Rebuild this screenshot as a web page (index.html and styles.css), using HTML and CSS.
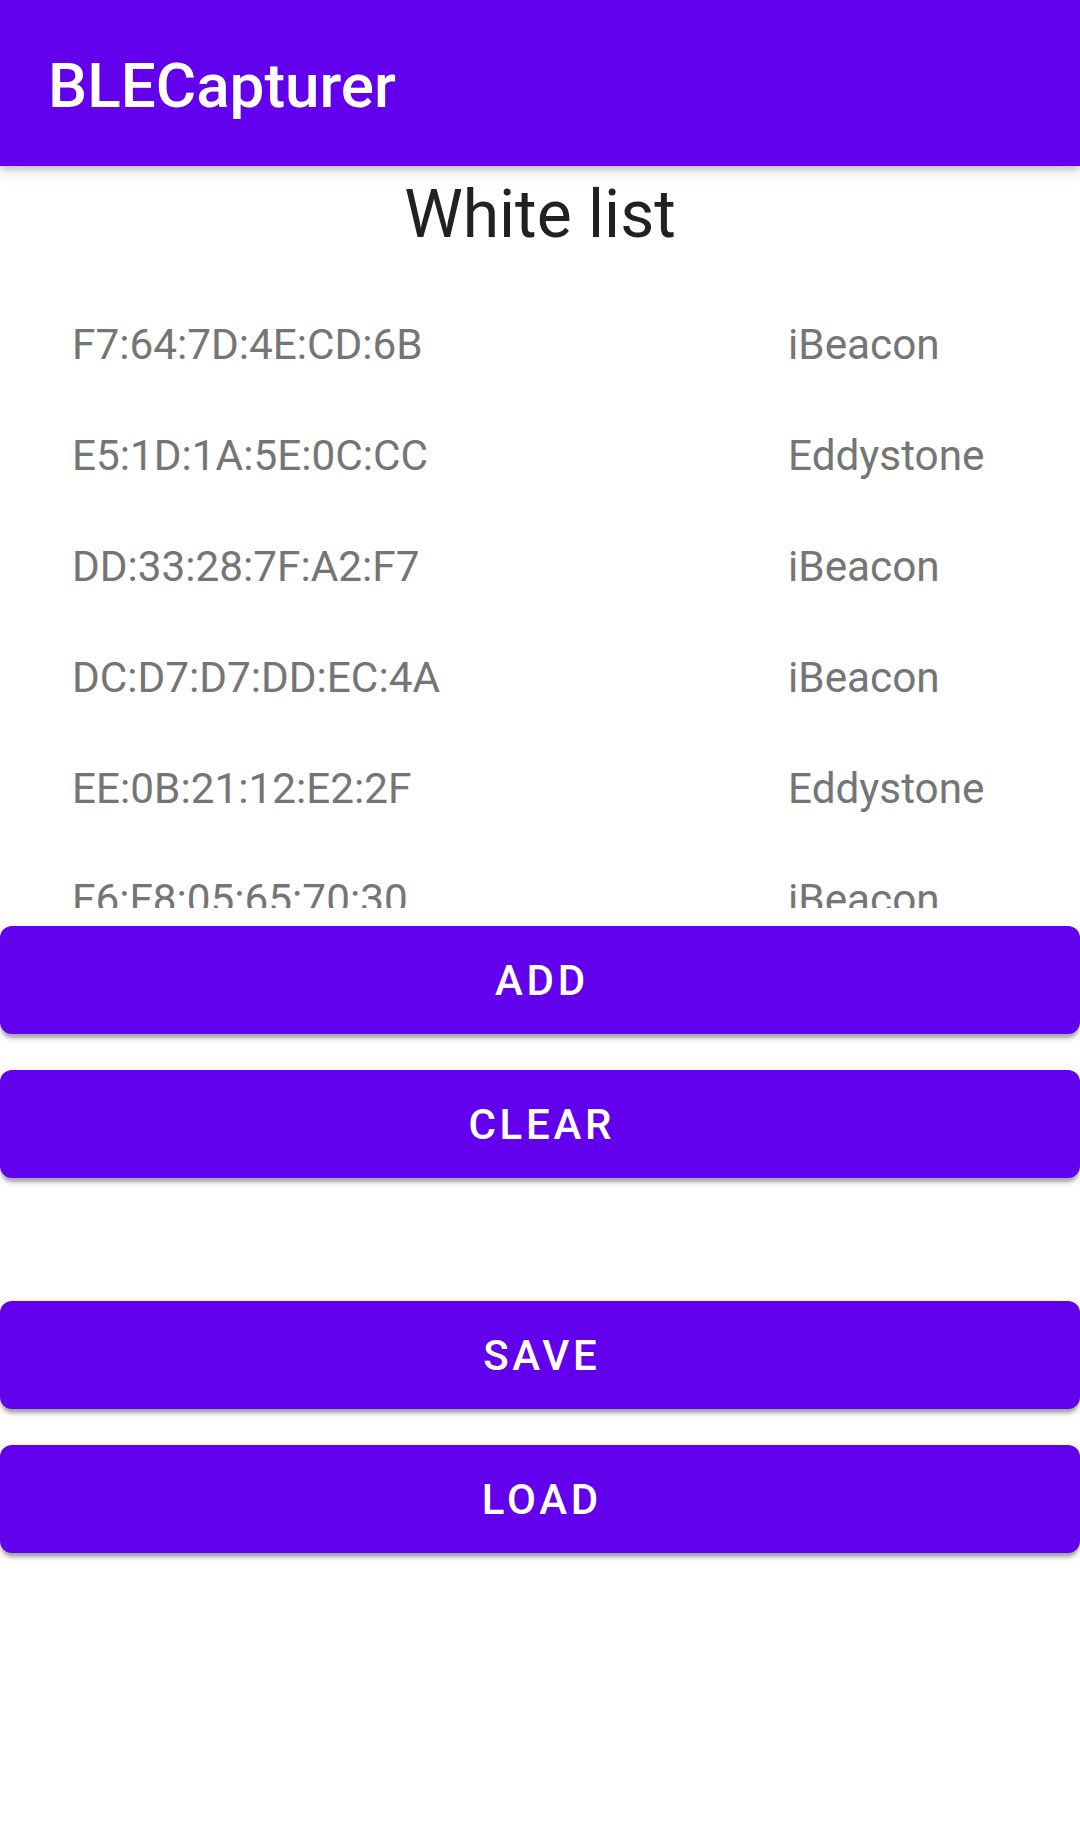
FILE: index.html
```html
<!DOCTYPE html>
<html lang="en">
<head>
<meta charset="utf-8">
<title>BLECapturer</title>
<link rel="stylesheet" href="styles.css">
</head>
<body>
<div class="screen">
  <header class="appbar"><span class="appbar-title">BLECapturer</span></header>
  <h1 class="heading">White list</h1>
  <div class="list">
    <div class="row"><span class="mac">F7:64:7D:4E:CD:6B</span><span class="type">iBeacon</span></div>
    <div class="row"><span class="mac">E5:1D:1A:5E:0C:CC</span><span class="type">Eddystone</span></div>
    <div class="row"><span class="mac">DD:33:28:7F:A2:F7</span><span class="type">iBeacon</span></div>
    <div class="row"><span class="mac">DC:D7:D7:DD:EC:4A</span><span class="type">iBeacon</span></div>
    <div class="row"><span class="mac">EE:0B:21:12:E2:2F</span><span class="type">Eddystone</span></div>
    <div class="row"><span class="mac">F6:F8:05:65:70:30</span><span class="type">iBeacon</span></div>
  </div>
  <div class="actions">
    <div class="group">
      <button class="btn">ADD</button>
      <button class="btn">CLEAR</button>
    </div>
    <div class="group">
      <button class="btn">SAVE</button>
      <button class="btn">LOAD</button>
    </div>
  </div>
</div>
</body>
</html>
```

FILE: styles.css
```css
html, body {
  margin: 0;
  padding: 0;
  background: #ffffff;
}

body {
  font-family: Roboto, "Noto Sans", "Liberation Sans", sans-serif;
}

.screen {
  width: 1080px;
  min-height: 1847px;
  display: flex;
  flex-direction: column;
}

.appbar {
  position: relative;
  z-index: 2;
  height: 166px;
  box-sizing: border-box;
  padding: 6px 0 0 48px;
  background: #6200ee;
  display: flex;
  align-items: center;
  box-shadow: 0 4px 6px rgba(0, 0, 0, 0.16), 0 8px 14px rgba(0, 0, 0, 0.08);
}

.appbar-title {
  color: #ffffff;
  font-size: 62px;
  font-weight: 500;
  line-height: 1;
}

.heading {
  margin: 10px 0 0;
  font-size: 66px;
  font-weight: 400;
  line-height: 77px;
  color: #212121;
  text-align: center;
}

.list {
  margin-top: 36px;
  height: 619px;
  overflow: hidden;
}

.row {
  height: 111px;
  display: grid;
  grid-template-columns: 716px 1fr;
  padding-left: 72px;
  font-size: 42.3px;
  line-height: 111px;
  color: #757575;
}

.actions {
  display: flex;
  flex-direction: column;
  gap: 123px;
  padding-top: 18px;
}

.group {
  display: flex;
  flex-direction: column;
  gap: 36px;
}

.btn {
  height: 108px;
  width: 1080px;
  margin: 0;
  border: none;
  border-radius: 12px;
  background: #6200ee;
  color: #ffffff;
  font-family: Roboto, "Noto Sans", "Liberation Sans", sans-serif;
  font-size: 42px;
  font-weight: 500;
  letter-spacing: 3.75px;
  padding: 0 0 0 3.75px;
  display: flex;
  align-items: center;
  justify-content: center;
  box-shadow: 0 6px 3px -2px rgba(0, 0, 0, 0.2), 0 4px 6px rgba(0, 0, 0, 0.14), 0 2px 10px rgba(0, 0, 0, 0.1);
}
```
